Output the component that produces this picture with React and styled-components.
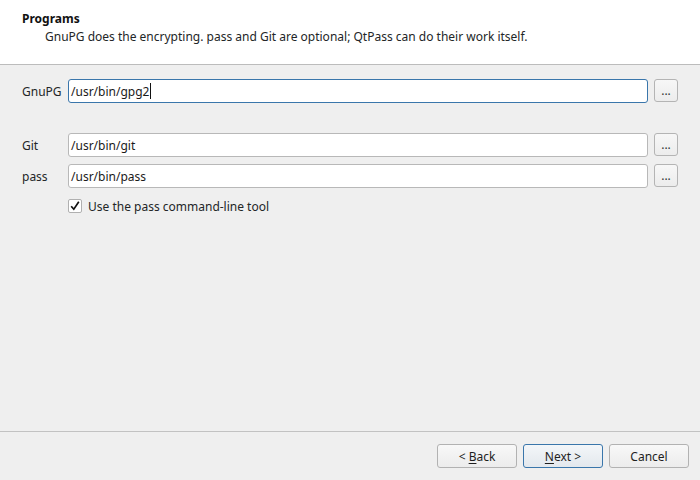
import React from "react";
import styled, { createGlobalStyle, css } from "styled-components";

const GlobalStyle = createGlobalStyle`
	html, body {
		margin: 0;
		padding: 0;
		background: #efefef;
	}
	body {
		font-family: "Noto Sans", "Open Sans", sans-serif;
		font-size: 12px;
		color: #232627;
	}
`;

const programs = [
	{ id: "gpg", label: "GnuPG", value: "/usr/bin/gpg2", focused: true },
	{ id: "git", label: "Git", value: "/usr/bin/git" },
	{ id: "pass", label: "pass", value: "/usr/bin/pass" },
];

const App = () => {
	const [gpg, git, pass] = programs;

	return (
		<StyledWizard>
			<GlobalStyle />
			<StyledHeader>
				<StyledTitle>Programs</StyledTitle>
				<StyledSubtitle>
					GnuPG does the encrypting. pass and Git are optional; QtPass can do
					their work itself.
				</StyledSubtitle>
			</StyledHeader>
			<StyledBody>
				<StyledForm>
					<ProgramRow {...gpg} />
					<StyledSpacer />
					<ProgramRow {...git} />
					<ProgramRow {...pass} />
					<StyledCheckRow>
						<StyledCheckbox>
							<svg width="12" height="12" viewBox="0 0 12 12">
								<path
									d="M2.2 6.2 L4.8 9.2 L9.8 1.8"
									fill="none"
									stroke="#111"
									strokeWidth="1.7"
								/>
							</svg>
						</StyledCheckbox>
						<span>Use the pass command-line tool</span>
					</StyledCheckRow>
				</StyledForm>
			</StyledBody>
			<StyledFooter>
				<StyledButton>
					<span>
						&lt; <u>B</u>ack
					</span>
				</StyledButton>
				<StyledButton primary>
					<span>
						<u>N</u>ext &gt;
					</span>
				</StyledButton>
				<StyledButton>
					<span>Cancel</span>
				</StyledButton>
			</StyledFooter>
		</StyledWizard>
	);
};

const ProgramRow = ({ label, value, focused }) => (
	<>
		<StyledLabel>{label}</StyledLabel>
		<StyledField focused={focused}>
			{value}
			{focused && <StyledCaret />}
		</StyledField>
		<StyledBrowse>...</StyledBrowse>
	</>
);

const StyledWizard = styled.div`
	width: 700px;
	height: 480px;
	display: flex;
	flex-direction: column;
	background: #efefef;
	overflow: hidden;
`;

const StyledHeader = styled.div`
	height: 65px;
	box-sizing: border-box;
	background: #ffffff;
	border-bottom: 1px solid #bcbcbc;
	padding: 10px 22px 0 22px;
	line-height: 18px;
`;

const StyledTitle = styled.div`
	font-weight: 700;
	color: #111;
`;

const StyledSubtitle = styled.div`
	padding: 0 0 0 23px;
	color: #232627;
`;

const StyledBody = styled.div`
	flex: 1 1 auto;
	padding: 14px 22px 0 22px;
`;

const StyledForm = styled.div`
	display: grid;
	grid-template-columns: 40px 1fr 24px;
	grid-template-rows: 24px 16px 24px 24px 22px;
	column-gap: 6px;
	row-gap: 7px;
	align-items: center;
`;

const StyledSpacer = styled.div`
	grid-column: 1 / -1;
`;

const StyledLabel = styled.div`
	color: #232627;
	white-space: nowrap;
`;

const StyledField = styled.div`
	height: 24px;
	box-sizing: border-box;
	display: flex;
	align-items: center;
	padding: 0 0 0 2px;
	background: #ffffff;
	border-radius: 3px;
	color: #1a1a1a;
	border: 1px solid #b8b8b8;
	${({ focused }) =>
		focused &&
		css`
			border-color: #3a76ab;
		`}
`;

const StyledCaret = styled.span`
	display: inline-block;
	width: 1px;
	height: 16px;
	background: #111;
	margin: 0 0 0 1px;
`;

const StyledBrowse = styled.div`
	height: 23px;
	align-self: start;
	box-sizing: border-box;
	border: 1px solid #b4b4b4;
	border-radius: 3px;
	background: linear-gradient(#f7f7f7, #ececec);
	display: flex;
	align-items: center;
	justify-content: center;
	padding: 0 0 1px 0;
	font-size: 12px;
	color: #333;
`;

const StyledCheckRow = styled.div`
	grid-column: 2 / -1;
	display: flex;
	align-items: center;
	gap: 6px;
	color: #232627;
`;

const StyledCheckbox = styled.span`
	width: 14px;
	height: 14px;
	box-sizing: border-box;
	border: 1px solid #b0b0b0;
	background: #ffffff;
	border-radius: 2px;
	display: flex;
	align-items: center;
	justify-content: center;
`;

const StyledFooter = styled.div`
	border-top: 1px solid #c2c2c2;
	display: flex;
	justify-content: flex-end;
	gap: 6px;
	padding: 12px 11px 12px 0;
`;

const StyledButton = styled.div`
	width: 80px;
	height: 24px;
	box-sizing: border-box;
	border: 1px solid #b2b2b2;
	border-radius: 3px;
	background: linear-gradient(#f8f8f8, #ececec);
	display: flex;
	align-items: center;
	justify-content: center;
	color: #1e1e1e;
	u {
		text-underline-offset: 2px;
	}
	${({ primary }) =>
		primary &&
		css`
			border-color: #3a76ab;
			background: linear-gradient(#f3f6f9, #e3e8ed);
		`}
`;

export default App;
